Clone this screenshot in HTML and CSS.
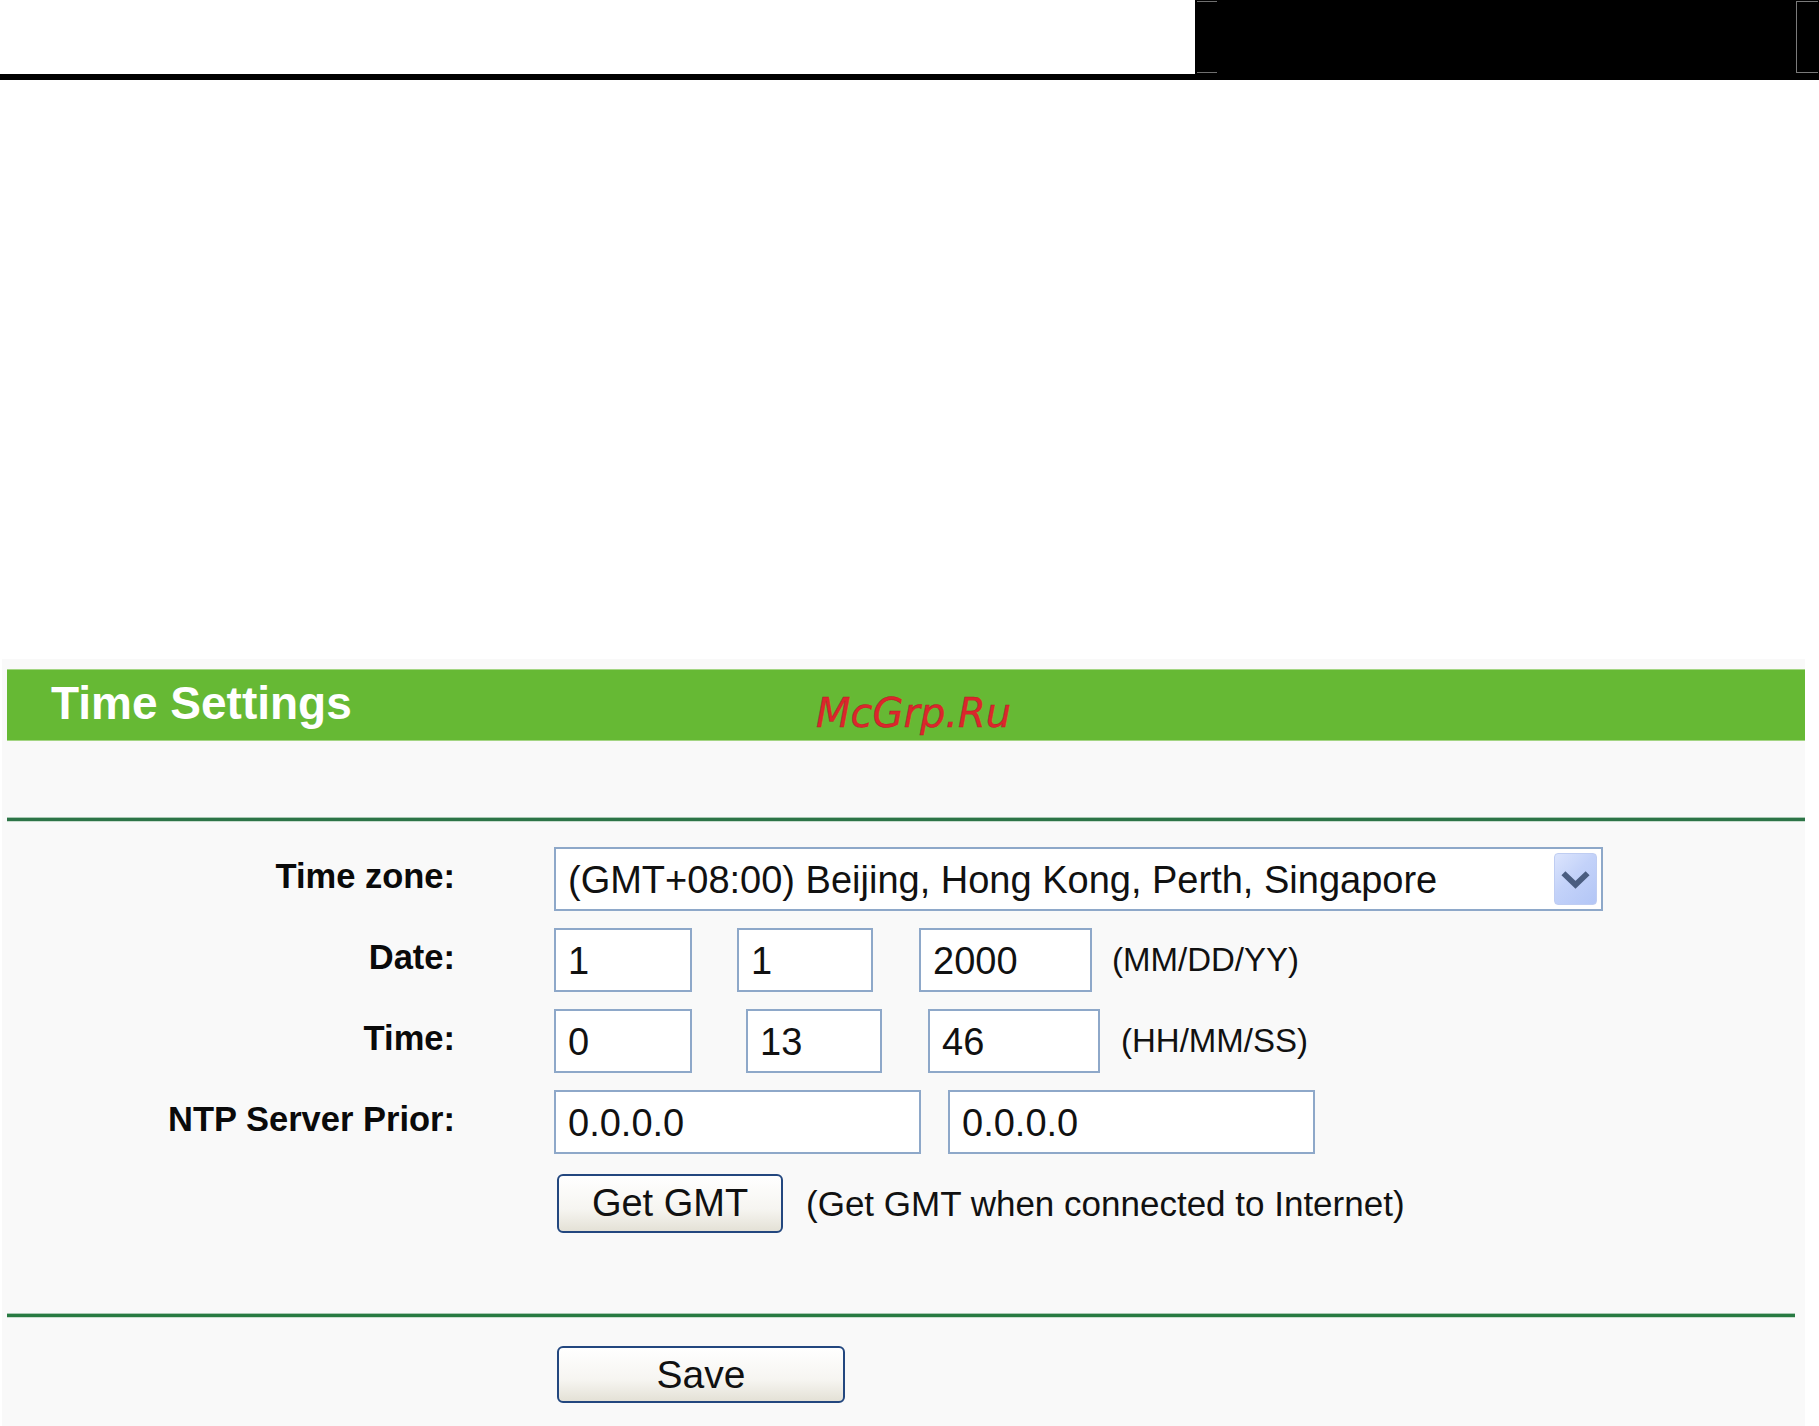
FILE: index.html
```html
<!DOCTYPE html>
<html lang="en">
<head>
<meta charset="utf-8">
<title>Time Settings</title>
<link rel="stylesheet" href="styles.css">
</head>
<body>
<header class="top">
  <div class="blackbox">
    <span class="mark mark-tl"></span>
    <span class="mark mark-bl"></span>
    <span class="bracket"></span>
  </div>
</header>
<div class="toprule"></div>

<main class="panel">
  <div class="titlebar">
    <h1 class="title">Time Settings</h1>
    <span class="watermark">McGrp.Ru</span>
  </div>
  <div class="sep"></div>

  <form class="form">
    <label class="lbl">Time zone:</label>
    <div class="ctl">
      <div class="select">
        <span class="select-text">(GMT+08:00) Beijing, Hong Kong, Perth, Singapore</span>
        <span class="drop">
          <svg width="43" height="52" viewBox="0 0 43 52"><polyline points="11,21 21.5,31 32,21" fill="none" stroke="#4a5d80" stroke-width="6" stroke-linecap="square" stroke-linejoin="miter"/></svg>
        </span>
      </div>
    </div>

    <label class="lbl">Date:</label>
    <div class="ctl">
      <input class="field date-mm" type="text" value="1">
      <input class="field date-dd" type="text" value="1">
      <input class="field date-yy" type="text" value="2000">
      <span class="note date-note">(MM/DD/YY)</span>
    </div>

    <label class="lbl">Time:</label>
    <div class="ctl">
      <input class="field time-hh" type="text" value="0">
      <input class="field time-mm" type="text" value="13">
      <input class="field time-ss" type="text" value="46">
      <span class="note time-note">(HH/MM/SS)</span>
    </div>

    <label class="lbl">NTP Server Prior:</label>
    <div class="ctl">
      <input class="field ntp ntp-first" type="text" value="0.0.0.0">
      <input class="field ntp" type="text" value="0.0.0.0">
    </div>

    <div class="ctl ctl-btn">
      <button class="btn btn-gmt" type="button">Get GMT</button>
      <span class="note gmt-note">(Get GMT when connected to Internet)</span>
    </div>
  </form>

  <div class="sep sep-bottom"></div>
  <div class="actions">
    <button class="btn btn-save" type="button">Save</button>
  </div>
</main>
</body>
</html>
```

FILE: styles.css
```css
* { box-sizing: border-box; }

html, body {
  margin: 0;
  padding: 0;
  background: #ffffff;
  overflow: hidden;
}

body {
  width: 1819px;
  height: 1426px;
  font-family: "Liberation Sans", Arial, sans-serif;
  color: #000;
}

/* ---------- top band ---------- */
.top {
  height: 74px;
  display: flex;
  justify-content: flex-end;
}

.blackbox {
  position: relative;
  width: 624px;
  height: 74px;
  background: #000;
}

.mark {
  position: absolute;
  left: 2px;
  width: 20px;
  height: 1px;
  background: #6f6f6f;
}
.mark-tl { top: 1px; }
.mark-bl { top: 72px; }

.bracket {
  position: absolute;
  left: 601px;
  top: 1px;
  width: 22px;
  height: 72px;
  border: 1px solid #7a7a7a;
  border-right: none;
}

.toprule {
  height: 6px;
  background: #000;
}

/* ---------- panel ---------- */
.panel {
  margin: 579px 0 0 2px;
  width: 1803px;
  height: 767px;
  background: #f9f9f9;
  padding: 10px 0 0 5px;
}

.titlebar {
  position: relative;
  height: 72px;
  background: #66b934;
  border-top: 1px solid #a3d582;
  border-bottom: 1px solid #a3d582;
  padding-left: 44px;
}

.title {
  margin: 0;
  font-size: 46px;
  font-weight: bold;
  line-height: 66px;
  color: #ffffff;
}

.watermark {
  position: absolute;
  left: 809px;
  top: 23px;
  font-family: "DejaVu Sans", sans-serif;
  font-style: italic;
  font-size: 40px;
  line-height: 40px;
  color: #dc262c;
  -webkit-text-stroke: 0.4px #b51d22;
}

.sep {
  height: 3px;
  margin-top: 77px;
  background: #2d7447;
  box-shadow: 0 -1px 0 #a8c9b3, 0 1px 0 #c9ddcf;
}

.sep-bottom {
  width: 1788px;
  margin-top: 81px;
  background: #287a42;
}

/* ---------- form ---------- */
.form {
  margin: 26px 0 0 0;
  display: grid;
  grid-template-columns: 448px 1fr;
  column-gap: 99px;
  row-gap: 17px;
}

.lbl {
  text-align: right;
  font-weight: bold;
  font-size: 34.5px;
  line-height: 40px;
  padding-top: 9px;
  color: #0a0a0a;
}

.ctl {
  display: flex;
  align-items: center;
  height: 64px;
}

.ctl-btn {
  grid-column: 2;
  height: 62px;
  align-items: flex-end;
}

.select {
  width: 1049px;
  height: 64px;
  display: flex;
  align-items: center;
  border: 2px solid #8ea8c9;
  background: #ffffff;
  padding-left: 12px;
}

.select-text {
  font-size: 38px;
  color: #111;
  white-space: nowrap;
  padding-top: 3px;
}

.drop {
  margin-left: auto;
  margin-right: 4px;
  width: 43px;
  height: 52px;
  border: 1px solid #bfcdf2;
  border-radius: 4px;
  background: linear-gradient(135deg, #dce5fd 0%, #c3d2f9 45%, #b3c6f6 100%);
  display: flex;
}

.field {
  height: 64px;
  margin: 0;
  border: 2px solid #8ea8c9;
  background: #ffffff;
  padding: 2px 0 0 12px;
  font-family: "Liberation Sans", Arial, sans-serif;
  font-size: 38px;
  color: #111;
  outline: none;
}

.date-mm { width: 138px; margin-right: 45px; }
.date-dd { width: 136px; margin-right: 46px; }
.date-yy { width: 173px; }
.time-hh { width: 138px; margin-right: 54px; }
.time-mm { width: 136px; margin-right: 46px; }
.time-ss { width: 172px; }
.ntp { width: 367px; }
.ntp-first { margin-right: 27px; }

.note {
  font-size: 33px;
  color: #111;
  white-space: nowrap;
}
.date-note { margin-left: 20px; }
.time-note { margin-left: 21px; }
.gmt-note {
  font-size: 35px;
  margin-left: 23px;
  align-self: center;
  padding-top: 3px;
}

/* ---------- buttons ---------- */
.btn {
  margin: 0 0 0 3px;
  border: 2px solid #23477f;
  border-radius: 6px;
  background: linear-gradient(#ffffff 0%, #f6f5f1 60%, #e4e1d6 100%);
  font-family: "Liberation Sans", Arial, sans-serif;
  font-size: 38px;
  color: #111;
  padding: 0;
}

.btn-gmt {
  width: 226px;
  height: 59px;
}

.actions {
  margin: 29px 0 0 547px;
}

.btn-save {
  width: 288px;
  height: 57px;
  font-size: 39px;
}
```
